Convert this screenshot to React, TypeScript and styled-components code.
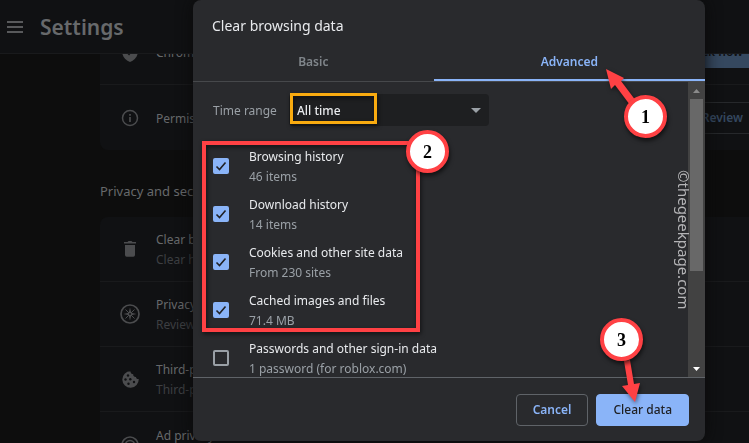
import React from "react";
import styled, { createGlobalStyle, css } from "styled-components";

const GlobalStyle = createGlobalStyle`
  *, *::before, *::after { box-sizing: border-box; }
  html, body, #root { height: 100%; }
  body {
    margin: 0;
    overflow: hidden;
    background: #0d0d0d;
    font: 12px/20px "Noto Sans", "Open Sans", sans-serif;
    color: #e8eaed;
  }
  button, select, input { font: inherit; margin: 0; }
  h1, h2, p { margin: 0; }
`;

const Page = styled.div`
  display: flex;
  flex-direction: column;
  height: 100vh;
  overflow: hidden;
  color: #67696b;
`;

const Header = styled.header`
  display: flex;
  flex: none;
  align-items: center;
  gap: 17px;
  height: 54px;
  padding: 0 7px;
  background: #101113;
  border-bottom: 1px solid #191a1c;
`;

const MenuButton = styled.button`
  display: flex;
  padding: 0;
  border: 0;
  background: none;
  color: #58595b;
`;

const PageTitle = styled.h1`
  font-size: 21px;
  line-height: 28px;
  font-weight: 600;
  color: #67696b;
`;

const Main = styled.main`
  flex: 1;
  min-height: 0;
  overflow: hidden;
  padding-left: 100px;
`;

const Card = styled.section<{ $scrolled?: boolean }>`
  margin-right: -26px;
  margin-top: ${(p) => (p.$scrolled ? "-34px" : "0")};
  background: #101113;
  border-radius: 8px;
`;

const SettingRow = styled.div`
  display: flex;
  align-items: center;
  gap: 16px;
  height: 65px;
  padding: 0 16px 0 20px;
  border-bottom: 1px solid #191a1c;
  &:last-child { border-bottom: 0; }
`;

const RowIcon = styled.span`
  display: flex;
  flex: none;
  width: 20px;
  justify-content: center;
  color: #4b4c4e;
`;

const RowText = styled.div`
  flex: 1;
  padding-top: 2px;
  white-space: nowrap;
`;

const RowNote = styled.p`
  color: #3d3f42;
`;

const SectionTitle = styled.h2`
  padding: 31px 0 16px;
  font-size: 13px;
  line-height: 20px;
  font-weight: 400;
`;

const RowButton = styled.button<{ $filled?: boolean }>`
  height: 32px;
  padding: 0 15px;
  border-radius: 4px;
  font-weight: 600;
  white-space: nowrap;
  border: 1px solid ${(p) => (p.$filled ? "#35485f" : "#26282b")};
  background: ${(p) => (p.$filled ? "#35485f" : "transparent")};
  color: ${(p) => (p.$filled ? "#101113" : "#34475f")};
`;

const Overlay = styled.div`
  position: fixed;
  inset: 0;
  display: flex;
  justify-content: flex-end;
  padding: 0 44px 2px 0;
`;

const Dialog = styled.div`
  position: relative;
  display: flex;
  flex-direction: column;
  width: 512px;
  max-width: 100%;
  background: #292a2d;
  border-radius: 8px;
  box-shadow: 0 0 16px #0a0a0a;
`;

const DialogTitle = styled.h2`
  padding: 14px 19px 10px;
  font-size: 14px;
  line-height: 24px;
  font-weight: 400;
`;

const Tabs = styled.div`
  display: grid;
  flex: none;
  grid-template-columns: 47fr 53fr;
  height: 34px;
  border-bottom: 1px solid #46484b;
`;

const Tab = styled.button<{ $active?: boolean }>`
  padding: 0 0 4px;
  border: 0;
  border-bottom: 2px solid ${(p) => (p.$active ? "#8ab4f8" : "transparent")};
  background: none;
  font-weight: 600;
  color: ${(p) => (p.$active ? "#8ab4f8" : "#80868b")};
`;

const Body = styled.div`
  display: flex;
  flex: 1;
  min-height: 0;
  overflow: hidden;
`;

const Content = styled.div`
  flex: 1;
  min-width: 0;
  padding: 12px 20px 0;
`;

const RangeRow = styled.div`
  display: flex;
  align-items: center;
  margin-bottom: 16px;
`;

const RangeLabel = styled.label`
  width: 76px;
  padding-top: 2px;
  color: #9aa0a6;
`;

const SelectWrap = styled.div`
  display: grid;
  width: 200px;
  align-items: center;
  background: #1e1f21;
  border-radius: 4px;
  & > * { grid-area: 1 / 1; }
  & > svg { justify-self: end; margin-right: 8px; pointer-events: none; }
`;

const Select = styled.select`
  appearance: none;
  width: 100%;
  height: 32px;
  padding: 2px 8px 0;
  border: 0;
  background: none;
  color: #e8eaed;
  font-weight: 500;
`;

const Option = styled.label`
  display: flex;
  align-items: center;
  gap: 20px;
  height: 48px;
  white-space: nowrap;
`;

const CheckWrap = styled.span`
  display: grid;
  width: 16px;
  height: 16px;
  & > * { grid-area: 1 / 1; }
  & > svg { pointer-events: none; visibility: hidden; }
  & > input:checked + svg { visibility: visible; }
`;

const Check = styled.input`
  appearance: none;
  width: 16px;
  height: 16px;
  border: 2px solid #9aa0a6;
  border-radius: 2px;
  &:checked { background: #8ab4f8; border-color: #8ab4f8; }
`;

const OptionText = styled.span`
  display: flex;
  flex-direction: column;
  padding-top: 2px;
`;

const Muted = styled.span`
  color: #9aa0a6;
`;

const Scrollbar = styled.div`
  display: flex;
  flex-direction: column;
  align-items: center;
  width: 17px;
  background: #424242;
`;

const ScrollArrow = styled.span`
  display: flex;
  align-items: center;
  justify-content: center;
  height: 17px;
`;

const ScrollTrack = styled.div`
  flex: 1;
  width: 13px;
`;

const ScrollThumb = styled.div`
  height: 66%;
  background: #686868;
`;

const Footer = styled.footer`
  display: flex;
  flex: none;
  justify-content: flex-end;
  gap: 8px;
  padding: 16px 16px 15px;
  border-top: 1px solid #5f6368;
`;

const ActionButton = styled.button<{ $primary?: boolean }>`
  height: 32px;
  padding: 0 16px;
  border-radius: 4px;
  border: 1px solid #5f6368;
  background: none;
  color: #8ab4f8;
  font-weight: 600;
  ${(p) =>
    p.$primary &&
    css`
      background: #8ab4f8;
      border-color: #8ab4f8;
      color: #202124;
      font-weight: 500;
    `}
`;

const Highlight = styled.div<{ $kind: "range" | "options" }>`
  position: absolute;
  pointer-events: none;
  ${(p) =>
    p.$kind === "range"
      ? css`
          left: 97px;
          top: 93px;
          width: 87px;
          height: 31px;
          border: 3px solid #f9ab10;
        `
      : css`
          left: 9px;
          top: 141px;
          width: 218px;
          height: 191px;
          border: 4px solid #ff4144;
        `}
  filter: drop-shadow(1px 2px 2px rgba(0, 0, 0, 0.6));
`;

const Arrows = styled.svg`
  position: absolute;
  left: 0;
  top: 0;
  pointer-events: none;
  filter: drop-shadow(1px 2px 2px rgba(0, 0, 0, 0.5));
`;

const Step = styled.span<{ $x: number; $y: number }>`
  position: absolute;
  left: ${(p) => p.$x}px;
  top: ${(p) => p.$y}px;
  display: flex;
  align-items: center;
  justify-content: center;
  width: 43px;
  height: 43px;
  border: 4px solid #ff4144;
  border-radius: 50%;
  background: #fff;
  color: #000;
  font: 700 18px/24px "Liberation Serif", serif;
  box-shadow: 1px 3px 4px rgba(0, 0, 0, 0.6);
`;

const Watermark = styled.span`
  position: absolute;
  left: 481px;
  top: 170px;
  writing-mode: vertical-rl;
  text-orientation: sideways;
  font-size: 15px;
  line-height: 20px;
  color: #b4b4b6;
`;

const options = [
  { name: "Browsing history", note: "46 items", on: true },
  { name: "Download history", note: "14 items", on: true },
  { name: "Cookies and other site data", note: "From 230 sites", on: true },
  { name: "Cached images and files", note: "71.4 MB", on: true },
  { name: "Passwords and other sign-in data", note: "1 password (for roblox.com)", on: false },
];

const ShieldIcon = () => (
  <svg width="16" height="20" viewBox="0 0 16 20" fill="currentColor">
    <path d="M8 0 16 3v6c0 5-3.400 9.600-8 11C3.400 18.600 0 14 0 9V3z" />
    <path d="M4 9l3 3 5-6" fill="none" stroke="#101113" strokeWidth="2" />
  </svg>
);

const InfoIcon = () => (
  <svg width="18" height="18" viewBox="0 0 18 18" fill="none" stroke="currentColor">
    <circle cx="9" cy="9" r="7.500" strokeWidth="1.500" />
    <path d="M9 8v5M9 5v1.700" strokeWidth="1.700" />
  </svg>
);

const TrashIcon = () => (
  <svg width="12" height="16" viewBox="0 0 12 16" fill="currentColor">
    <path d="M0 1h3.500l1-1h3l1 1H12v1.600H0zM1 4h10v10a1.700 1.700 0 0 1-1.700 1.700H2.700A1.700 1.700 0 0 1 1 14z" />
  </svg>
);

const CompassIcon = () => (
  <svg width="20" height="20" viewBox="0 0 20 20" fill="none" stroke="currentColor">
    <circle cx="10" cy="10" r="9" strokeWidth="1.700" />
    <path d="M5.500 5.500l9 9M14.500 5.500l-9 9" strokeWidth="1" />
    <path d="M10 3.500l1.300 5.200 5.200 1.300-5.200 1.300L10 16.500l-1.300-5.200L3.500 10l5.200-1.300z" fill="currentColor" stroke="none" />
    <circle cx="10" cy="10" r="1" fill="#101113" stroke="none" />
  </svg>
);

const CookieIcon = () => (
  <svg width="17" height="17" viewBox="0 0 17 17" fill="currentColor">
    <path d="M8.500.3A8.200 8.200 0 1 0 16.700 8c-1.700.2-2.700-.7-2.700-2.100-1.800.2-3-1-2.700-2.700C9.500 3.200 8.400 2 8.500.3z" />
    <g fill="#101113">
      <circle cx="6" cy="4.500" r="1.200" />
      <circle cx="3.500" cy="8.500" r="1.200" />
      <circle cx="8.300" cy="8.300" r="1.200" />
      <circle cx="6.500" cy="12.700" r="1.200" />
      <circle cx="12" cy="11" r="1.200" />
    </g>
  </svg>
);

const AdIcon = () => (
  <svg width="18" height="18" viewBox="0 0 18 18" fill="none" stroke="currentColor" strokeWidth="1.600">
    <circle cx="9" cy="9" r="8" />
    <circle cx="9" cy="9" r="4.500" />
    <path d="M9 9l6 6" />
  </svg>
);

const privacyRows = [
  { icon: <TrashIcon />, name: "Clear browsing data", note: "Clear history, cookies, cache, and more" },
  { icon: <CompassIcon />, name: "Privacy Guide", note: "Review key privacy and security controls" },
  { icon: <CookieIcon />, name: "Third-party cookies", note: "Third-party cookies are blocked in Incognito mode" },
  { icon: <AdIcon />, name: "Ad privacy", note: "Customize the info used by sites to show you ads" },
];

export default function App() {
  return (
    <>
      <GlobalStyle />
      <Page>
        <Header>
          <MenuButton aria-label="Main menu">
            <svg width="16" height="12" viewBox="0 0 16 12" fill="currentColor">
              <path d="M0 0h16v2H0zM0 5h16v2H0zM0 10h16v2H0z" />
            </svg>
          </MenuButton>
          <PageTitle>Settings</PageTitle>
        </Header>
        <Main>
          <Card $scrolled>
            <SettingRow>
              <RowIcon><ShieldIcon /></RowIcon>
              <RowText>Chrome</RowText>
              <RowButton $filled>Check now</RowButton>
            </SettingRow>
            <SettingRow>
              <RowIcon><InfoIcon /></RowIcon>
              <RowText>Permissions</RowText>
              <RowButton>Review</RowButton>
            </SettingRow>
          </Card>
          <SectionTitle>Privacy and security</SectionTitle>
          <Card>
            {privacyRows.map((r) => (
              <SettingRow key={r.name}>
                <RowIcon>{r.icon}</RowIcon>
                <RowText>
                  <p>{r.name}</p>
                  <RowNote>{r.note}</RowNote>
                </RowText>
              </SettingRow>
            ))}
          </Card>
        </Main>
      </Page>
      <Overlay>
        <Dialog role="dialog" aria-labelledby="dialog-title">
          <DialogTitle id="dialog-title">Clear browsing data</DialogTitle>
          <Tabs role="tablist">
            <Tab role="tab" aria-selected="false">Basic</Tab>
            <Tab role="tab" aria-selected="true" $active>Advanced</Tab>
          </Tabs>
          <Body>
            <Content>
              <RangeRow>
                <RangeLabel htmlFor="range">Time range</RangeLabel>
                <SelectWrap>
                  <Select id="range" defaultValue="all">
                    <option value="all">All time</option>
                  </Select>
                  <svg width="10" height="5" viewBox="0 0 10 5" fill="#9aa0a6">
                    <path d="M0 0h10L5 5z" />
                  </svg>
                </SelectWrap>
              </RangeRow>
              {options.map((o) => (
                <Option key={o.name}>
                  <CheckWrap>
                    <Check type="checkbox" defaultChecked={o.on} />
                    <svg width="16" height="16" viewBox="0 0 16 16" fill="none" stroke="#202124" strokeWidth="1.600">
                      <path d="M3.500 8.500l3 3 6-7" />
                    </svg>
                  </CheckWrap>
                  <OptionText>
                    <span>{o.name}</span>
                    <Muted>{o.note}</Muted>
                  </OptionText>
                </Option>
              ))}
            </Content>
            <Scrollbar aria-hidden="true">
              <ScrollArrow>
                <svg width="7" height="4" viewBox="0 0 7 4" fill="#8b8b8b"><path d="M0 4h7L3.500 0z" /></svg>
              </ScrollArrow>
              <ScrollTrack><ScrollThumb /></ScrollTrack>
              <ScrollArrow>
                <svg width="7" height="4" viewBox="0 0 7 4" fill="#fff"><path d="M0 0h7L3.500 4z" /></svg>
              </ScrollArrow>
            </Scrollbar>
          </Body>
          <Footer>
            <ActionButton>Cancel</ActionButton>
            <ActionButton $primary>Clear data</ActionButton>
          </Footer>
          <Highlight $kind="range" />
          <Highlight $kind="options" />
          <Arrows width="512" height="440" viewBox="0 0 512 440" fill="#ff4144">
            <path d="M413 69L431 78L428 81L443 101L437 105L422 85L418 89z" />
            <path d="M442 402L429 386L435 385L431 361L437 360L441 384L447 383z" />
          </Arrows>
          <Step $x={431} $y={95}>1</Step>
          <Step $x={213} $y={130}>2</Step>
          <Step $x={407} $y={318}>3</Step>
          <Watermark>©thegeekpage.com</Watermark>
        </Dialog>
      </Overlay>
    </>
  );
}
